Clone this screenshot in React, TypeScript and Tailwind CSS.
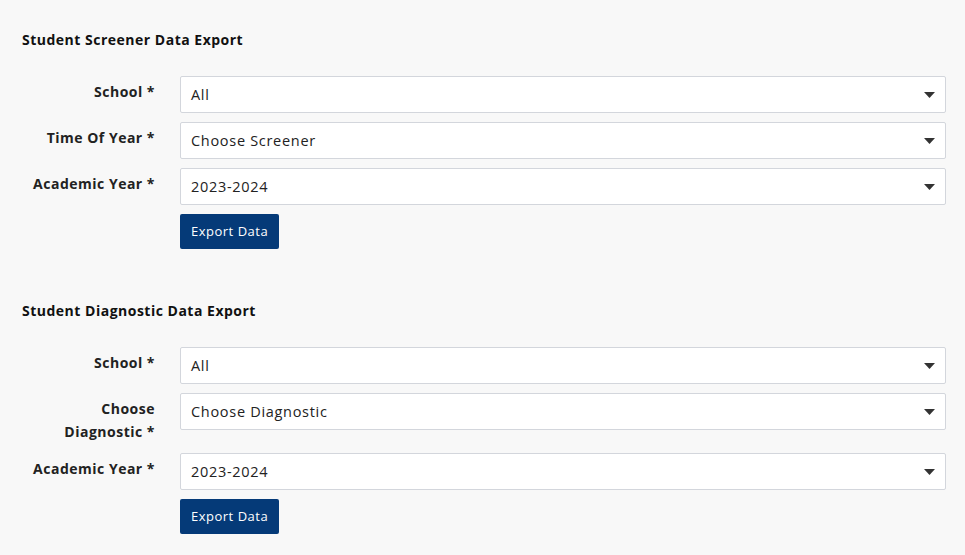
import React from "react";

function Caret() {
  return (
    <svg width="11" height="6" viewBox="0 0 11 6" className="absolute right-[10px] top-1/2 -translate-y-1/2">
      <path d="M0 0 L11 0 L5.5 6 Z" fill="#333" />
    </svg>
  );
}

function Row({ label, value }: { label: React.ReactNode; value: string }) {
  return (
    <div className="flex items-start gap-[25px] mb-[9px]">
      <div className="w-[133px] shrink-0 text-right font-bold text-[14px] tracking-[0.5px] leading-[23px] pt-[4px] pb-[1px] text-[#222]">{label}</div>
      <div className="relative flex-1 h-[37px] bg-white border border-[#d3d6dc] rounded-[2px] flex items-center pl-[10px] text-[14.5px] tracking-[0.7px] text-[#222]">
        {value}
        <Caret />
      </div>
    </div>
  );
}

function Section({ title, rows }: { title: string; rows: { label: React.ReactNode; value: string }[] }) {
  return (
    <div>
      <div className="font-bold text-[14px] tracking-[0.5px] leading-[20px] text-[#111] mb-[26px]">{title}</div>
      {rows.map((r, i) => (
        <Row key={i} label={r.label} value={r.value} />
      ))}
      <div className="pl-[158px]">
        <button className="h-[35px] px-[11px] bg-[#053a78] text-white text-[13px] tracking-[0.5px] rounded-[2px]">Export Data</button>
      </div>
    </div>
  );
}

export default function App() {
  return (
    <div className="w-[965px] h-[555px] bg-[#f8f8f8] overflow-hidden pl-[22px] pr-[19px] pt-[30px]" style={{ fontFamily: '"Open Sans", "Noto Sans", sans-serif' }}>
      <Section
        title="Student Screener Data Export"
        rows={[
          { label: "School *", value: "All" },
          { label: "Time Of Year *", value: "Choose Screener" },
          { label: "Academic Year *", value: "2023-2024" },
        ]}
      />
      <div className="h-[52px]" />
      <Section
        title="Student Diagnostic Data Export"
        rows={[
          { label: "School *", value: "All" },
          { label: <>Choose<br />Diagnostic *</>, value: "Choose Diagnostic" },
          { label: "Academic Year *", value: "2023-2024" },
        ]}
      />
    </div>
  );
}
